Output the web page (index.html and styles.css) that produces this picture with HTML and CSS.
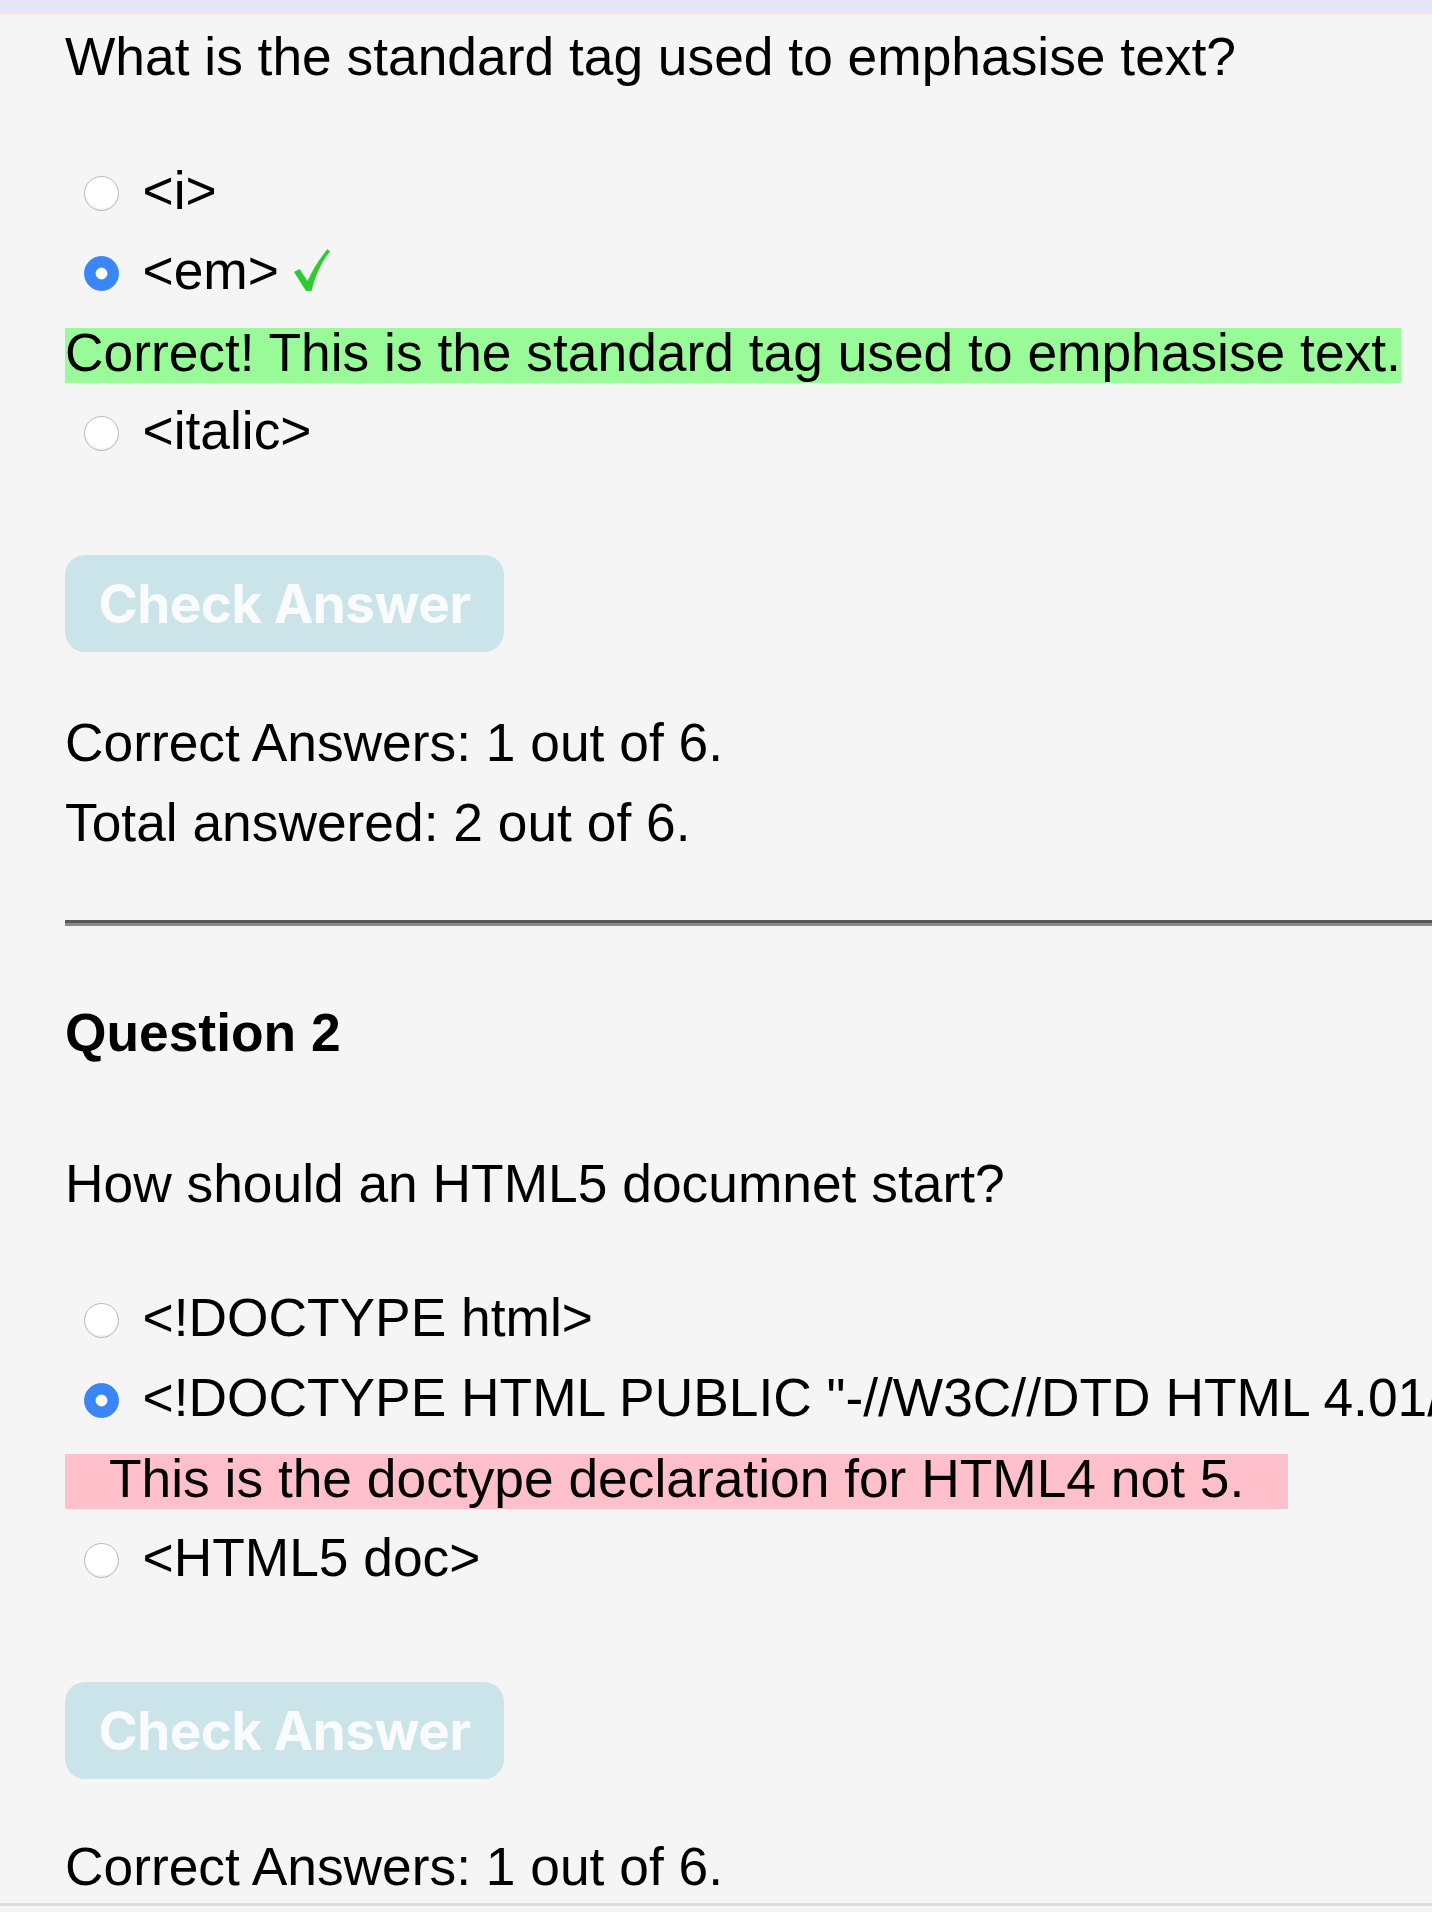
FILE: index.html
```html
<!DOCTYPE html>
<html lang="en">
<head>
<meta charset="utf-8">
<title>Quiz</title>
<link rel="stylesheet" href="styles.css">
</head>
<body>
<div class="page">
  <div class="topbar"></div>
  <main class="content">
    <section class="quiz quiz-first">
      <p class="question">What is the standard tag used to emphasise text?</p>
      <div class="options">
        <label class="option"><input class="radio" type="radio" name="q1"><span class="opt-text">&lt;i&gt;</span></label>
        <label class="option"><input class="radio" type="radio" name="q1" checked><span class="opt-text">&lt;em&gt; <svg class="tick" viewBox="0 0 36 42" width="36" height="42" aria-hidden="true"><path d="M0 23 L5.5 20 L13.5 32 C19 20 26 9 33.5 0 L36 2.5 C28 12 21.5 26 17.5 42 L12 42 Z"/></svg></span></label>
        <div class="feedback correct">Correct! This is the standard tag used to emphasise text.</div>
        <label class="option"><input class="radio" type="radio" name="q1"><span class="opt-text">&lt;italic&gt;</span></label>
      </div>
      <button class="check-btn" type="button" disabled>Check Answer</button>
      <div class="score">
        <p class="score-line">Correct Answers: 1 out of 6.</p>
        <p class="score-line">Total answered: 2 out of 6.</p>
      </div>
    </section>
    <hr class="divider">
    <section class="quiz quiz-next">
      <h3 class="q-title">Question 2</h3>
      <p class="question question-after-title">How should an HTML5 documnet start?</p>
      <div class="options">
        <label class="option"><input class="radio" type="radio" name="q2"><span class="opt-text">&lt;!DOCTYPE html&gt;</span></label>
        <label class="option"><input class="radio" type="radio" name="q2" checked><span class="opt-text">&lt;!DOCTYPE HTML PUBLIC "-//W3C//DTD HTML 4.01//EN" "http://www.w3.org/TR/html4/strict.dtd"&gt;</span></label>
        <div class="feedback wrong">This is the doctype declaration for HTML4 not 5.</div>
        <label class="option"><input class="radio" type="radio" name="q2"><span class="opt-text">&lt;HTML5 doc&gt;</span></label>
      </div>
      <button class="check-btn" type="button" disabled>Check Answer</button>
      <div class="score">
        <p class="score-line score-last">Correct Answers: 1 out of 6.</p>
      </div>
    </section>
  </main>
  <div class="bottombar"></div>
</div>
</body>
</html>
```

FILE: styles.css
```css
html, body {
  margin: 0;
  padding: 0;
  height: 100%;
  overflow: hidden;
}

body {
  background: #f5f5f5;
  font-family: "Liberation Sans", Arial, Helvetica, sans-serif;
  font-size: 53.33px;
  color: #000;
}

.page {
  height: 100vh;
  display: flex;
  flex-direction: column;
  overflow: hidden;
}

.topbar {
  flex: none;
  height: 13px;
  background: #e6e6fa;
  border-bottom: 2px solid #fde8c9;
}

.content {
  flex: 1;
  min-height: 0;
  overflow: hidden;
  padding-left: 65px;
  background: #f5f5f5;
}

.bottombar {
  flex: none;
  height: 6px;
  border-top: 3px solid #dcdcdc;
  background: #f5f5f5;
}

.quiz {
  display: flex;
  flex-direction: column;
  align-items: stretch;
}

.quiz-first {
  margin-top: 1.5px;
}

.quiz-next {
  margin-top: 66.5px;
}

.question,
.score-line,
.q-title {
  margin: 0;
  line-height: 80px;
  white-space: nowrap;
}

.score-last {
  line-height: 74px;
}

.q-title {
  font-size: 53.33px;
  font-weight: bold;
}

.question-after-title {
  margin-top: 71px;
}

.options {
  margin-top: 54px;
  white-space: nowrap;
}

.option {
  display: flex;
  align-items: center;
  height: 80px;
  line-height: 80px;
}

.radio {
  appearance: none;
  -webkit-appearance: none;
  flex: none;
  box-sizing: border-box;
  width: 35px;
  height: 35px;
  margin: 5px 24px 0 18.5px;
  border-radius: 50%;
  border: 1.5px solid #b9b9b9;
  background: #ffffff;
  box-shadow: inset 0 -1.5px 1.5px rgba(0, 0, 0, 0.07);
}

.radio:checked {
  border-color: #3b86f7;
  background: radial-gradient(circle, #ffffff 0 5.2px, #3b86f7 6.4px);
  box-shadow: none;
}

.opt-text {
  white-space: nowrap;
}

.tick {
  fill: #30cb30;
  vertical-align: -2px;
}

.feedback {
  width: fit-content;
  line-height: 49px;
  padding-bottom: 6px;
  white-space: nowrap;
}

.feedback.correct {
  background: #98fb98;
  margin: 17.5px 0 7.5px;
}

.feedback.wrong {
  background: #ffc0cb;
  margin: 16.5px 0 8.5px;
  padding-left: 44px;
  padding-right: 44px;
}

.check-btn {
  align-self: flex-start;
  display: flex;
  align-items: center;
  justify-content: center;
  width: 439px;
  height: 97px;
  margin-top: 84.5px;
  padding: 0;
  border: none;
  border-radius: 20px;
  background: #cae4ea;
  color: #f9fbfc;
  font-family: Inter, "Liberation Sans", Arial, sans-serif;
  font-weight: 700;
  font-size: 53px;
  letter-spacing: -0.5px;
}

.score {
  margin-top: 50.5px;
}

.divider {
  margin: 57.5px 0 0;
  height: 0;
  border: none;
  border-top: 3px solid #575757;
  border-bottom: 3px solid #898989;
}
```
